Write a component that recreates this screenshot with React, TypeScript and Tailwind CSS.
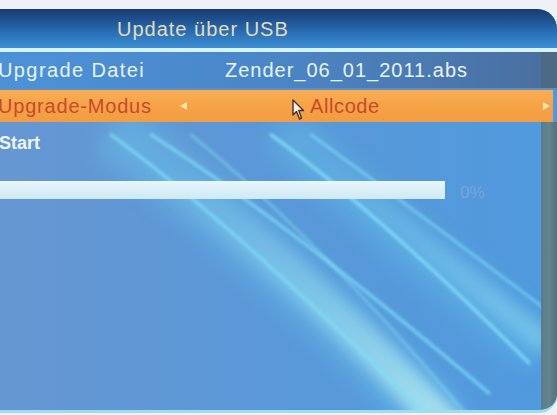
import React from "react";

function Streaks() {
  return (
    <svg
      className="pointer-events-none absolute left-0 top-0"
      width="557"
      height="415"
      viewBox="0 0 557 415"
    >
      <defs>
        <filter id="b6" x="-20%" y="-20%" width="140%" height="140%">
          <feGaussianBlur stdDeviation="7" />
        </filter>
        <filter id="b2" x="-20%" y="-20%" width="140%" height="140%">
          <feGaussianBlur stdDeviation="1.8" />
        </filter>
        <filter id="b12" x="-30%" y="-30%" width="160%" height="160%">
          <feGaussianBlur stdDeviation="12" />
        </filter>
        <linearGradient id="fade" gradientUnits="userSpaceOnUse" x1="0" y1="160" x2="0" y2="415">
          <stop offset="0" stopColor="#b4f0f4" stopOpacity="0" />
          <stop offset="0.5" stopColor="#b4f0f4" stopOpacity="0.35" />
          <stop offset="1" stopColor="#c8f6f2" stopOpacity="0.7" />
        </linearGradient>
        <linearGradient id="fade2" gradientUnits="userSpaceOnUse" x1="0" y1="150" x2="0" y2="360">
          <stop offset="0" stopColor="#a0eaf4" stopOpacity="0" />
          <stop offset="1" stopColor="#a0eaf4" stopOpacity="0.45" />
        </linearGradient>
      </defs>
      {/* wide soft bands */}
      <path d="M110 120 Q250 220 445 420" stroke="#6fd8f4" strokeWidth="55" fill="none" opacity="0.33" filter="url(#b12)" />
      <path d="M280 120 Q390 220 545 345" stroke="#6fd8f4" strokeWidth="45" fill="none" opacity="0.28" filter="url(#b12)" />
      <path d="M150 150 Q290 250 455 425" stroke="url(#fade)" strokeWidth="34" fill="none" filter="url(#b6)" />
      <path d="M320 150 Q430 240 548 335" stroke="url(#fade2)" strokeWidth="22" fill="none" filter="url(#b6)" />
      {/* thin bright lines */}
      <path d="M110 125 Q240 220 440 420" stroke="#7ee0f8" strokeWidth="3.5" fill="none" opacity="0.7" filter="url(#b2)" />
      <path d="M150 125 Q290 215 490 385" stroke="#7ee0f8" strokeWidth="3.5" fill="none" opacity="0.7" filter="url(#b2)" />
      <path d="M270 125 Q380 205 530 355" stroke="#84e4f8" strokeWidth="3.5" fill="none" opacity="0.75" filter="url(#b2)" />
      <path d="M310 125 Q420 205 545 300" stroke="#80e2f8" strokeWidth="3" fill="none" opacity="0.6" filter="url(#b2)" />
      <path d="M190 125 Q320 230 470 410" stroke="#7fdcf4" strokeWidth="3" fill="none" opacity="0.5" filter="url(#b2)" />
    </svg>
  );
}

function Cursor() {
  return (
    <svg width="13" height="22" viewBox="0 0 13 22" className="block">
      <path
        d="M1 1 L1 16 L4.5 12.5 L7.5 20 L9.5 19 L6.8 11.5 L11.5 11.5 Z"
        fill="#f4f0ea"
        stroke="#4a3020"
        strokeWidth="1.4"
        strokeLinejoin="round"
      />
    </svg>
  );
}

export default function App() {
  return (
    <div className="relative h-[415px] w-[557px] overflow-hidden bg-[#eef2f5] pt-[9px] font-['Liberation_Sans',Arial,sans-serif]">
      <div className="relative flex h-[404px] w-[557px] flex-col overflow-hidden rounded-tr-[20px] rounded-br-[18px] border-b-[3px] border-[#9fdcf0] bg-gradient-to-r from-[#6697d2] via-[#5a98d8] to-[#4f9ade]">
        <Streaks />
        {/* title */}
        <div className="relative z-10 flex h-[39px] items-center bg-gradient-to-b from-[#173a70] via-[#2566ac] to-[#3d90d4] pl-[117px]">
          <span className="text-[20px] leading-none tracking-[1px] text-[#e4dcb8]">Update über USB</span>
        </div>
        <div className="relative z-10 h-[4px] bg-[#d6f2fb]" />
        {/* row 1 */}
        <div className="relative z-10 flex h-[36px]">
          <div className="flex flex-1 items-center bg-gradient-to-r from-[#4c92d8] via-[#4a86c8] to-[#4a70a0]">
            <span className="-ml-[2px] w-[227px] text-[20px] leading-none tracking-[1.4px] text-[#e6f4ff]">Upgrade Datei</span>
            <span className="text-[20px] leading-none tracking-[1px] text-[#e6f4ff]">Zender_06_01_2011.abs</span>
          </div>
          <div className="w-[16px] bg-[#4d6a84]" />
        </div>
        <div className="relative z-10 h-[2px] bg-[#5b8fc8]" />
        {/* row 2 orange */}
        <div className="relative z-10 flex h-[32px] w-[553px] items-center bg-gradient-to-b from-[#f9ae55] via-[#f6a247] to-[#f39c42]">
          <span className="-ml-[2px] w-[182px] text-[20px] leading-none tracking-[0.8px] text-[#c84a2c]">Upgrade-Modus</span>
          <span className="h-0 w-0 border-y-[4px] border-r-[7px] border-y-transparent border-r-[#ffe6a6]" />
          <span className="ml-[105px] mt-[8px]">
            <Cursor />
          </span>
          <span className="ml-[5px] text-[20px] leading-none tracking-[0.6px] text-[#c84a2c]">Allcode</span>
          <span className="ml-auto mr-[3px] h-0 w-0 border-y-[4px] border-l-[7px] border-y-transparent border-l-[#ffe6a6]" />
        </div>
        {/* lower */}
        <div className="relative z-10 flex flex-1">
          <div className="flex flex-1 flex-col">
            <div className="mt-[10px] h-[22px]">
              <span className="-ml-[1px] text-[18px] font-bold leading-none text-[#eef6ff]">Start</span>
            </div>
            <div className="mt-[25px] flex items-center">
              <div className="h-[18px] w-[445px] bg-gradient-to-b from-[#e8f6fb] to-[#cfe9f3]" />
              <span className="ml-[15px] mt-[5px] text-[17px] leading-none text-[#78a6d8]">0%</span>
            </div>
          </div>
          <div className="w-[16px] rounded-br-[16px] bg-gradient-to-r from-[#5a7c8a] via-[#64848e] to-[#55707c]" />
        </div>
      </div>
    </div>
  );
}
